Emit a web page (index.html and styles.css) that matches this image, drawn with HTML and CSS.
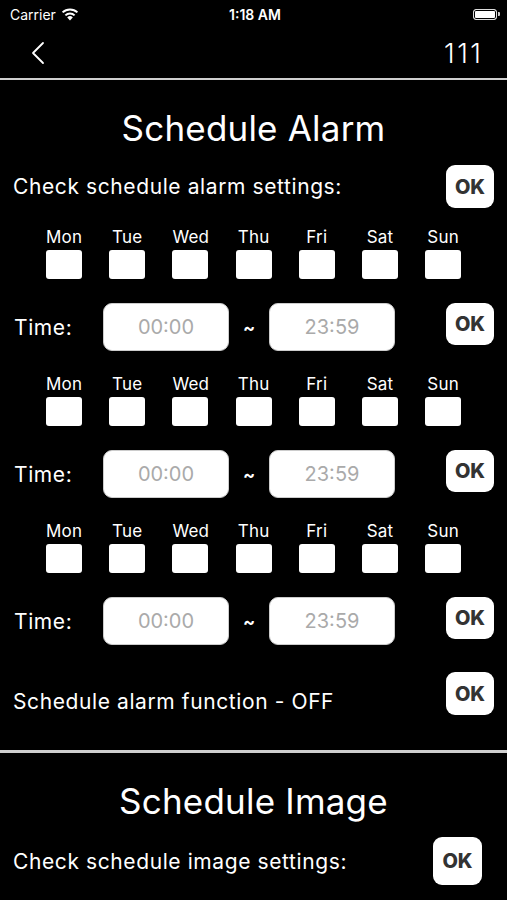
FILE: index.html
```html
<!DOCTYPE html>
<html lang="en">
<head>
    <meta charset="UTF-8">
    <meta name="viewport" content="width=device-width, initial-scale=1.0">
    <title>Schedule Alarm</title>
    <link rel="stylesheet" href="styles.css">
</head>
<body>
    <div class="status-bar">
        <div class="carrier">
            Carrier
            <svg class="wifi" width="18" height="13" viewBox="0 0 18 13">
                <path d="M9 12.5 L6.2 9.4 A4 4 0 0 1 11.8 9.4 Z" fill="#fff"/>
                <path d="M4.4 7.4 A6.6 6.6 0 0 1 13.6 7.4" stroke="#fff" stroke-width="2" fill="none"/>
                <path d="M1.6 4.4 A10.6 10.6 0 0 1 16.4 4.4" stroke="#fff" stroke-width="2" fill="none"/>
            </svg>
        </div>
        <div class="clock">1:18 AM</div>
        <div class="battery">
            <span class="battery-body"></span>
            <span class="battery-nub"></span>
        </div>
    </div>

    <nav class="nav-bar">
        <svg class="back" width="16" height="24" viewBox="0 0 16 24">
            <polyline points="13,2 3,12 13,22" stroke="#fff" stroke-width="1.8" fill="none" stroke-linecap="round" stroke-linejoin="round"/>
        </svg>
        <span class="nav-title">111</span>
    </nav>
    <div class="divider"></div>

    <section class="section">
        <h1 class="section-title">Schedule Alarm</h1>
        <div class="check-row">
            <span class="label">Check schedule alarm settings:</span>
            <button class="ok-btn">OK</button>
        </div>

        <!-- 第一組 -->
        <div class="days">
            <span>Mon</span><span>Tue</span><span>Wed</span><span>Thu</span><span>Fri</span><span>Sat</span><span>Sun</span>
            <i></i><i></i><i></i><i></i><i></i><i></i><i></i>
        </div>
        <div class="time-row">
            <span class="time-label">Time:</span>
            <div class="time-box">00:00</div>
            <span class="tilde">~</span>
            <div class="time-box">23:59</div>
            <button class="ok-btn small">OK</button>
        </div>

        <!-- 第二組 -->
        <div class="days">
            <span>Mon</span><span>Tue</span><span>Wed</span><span>Thu</span><span>Fri</span><span>Sat</span><span>Sun</span>
            <i></i><i></i><i></i><i></i><i></i><i></i><i></i>
        </div>
        <div class="time-row">
            <span class="time-label">Time:</span>
            <div class="time-box">00:00</div>
            <span class="tilde">~</span>
            <div class="time-box">23:59</div>
            <button class="ok-btn small">OK</button>
        </div>

        <!-- 第三組 -->
        <div class="days">
            <span>Mon</span><span>Tue</span><span>Wed</span><span>Thu</span><span>Fri</span><span>Sat</span><span>Sun</span>
            <i></i><i></i><i></i><i></i><i></i><i></i><i></i>
        </div>
        <div class="time-row">
            <span class="time-label">Time:</span>
            <div class="time-box">00:00</div>
            <span class="tilde">~</span>
            <div class="time-box">23:59</div>
            <button class="ok-btn small">OK</button>
        </div>

        <div class="function-row">
            <span class="label">Schedule alarm function - OFF</span>
            <button class="ok-btn">OK</button>
        </div>
    </section>
    <div class="divider thick"></div>

    <section class="section">
        <h1 class="section-title image-title">Schedule Image</h1>
        <div class="check-row image-row">
            <span class="label">Check schedule image settings:</span>
            <button class="ok-btn big">OK</button>
        </div>
    </section>
</body>
</html>
```

FILE: styles.css
```css
body {
    margin: 0;
    background-color: #000;
    color: #fff;
    font-family: Inter, "Liberation Sans", sans-serif;
    width: 507px;
    height: 900px;
    overflow: hidden;
}
.status-bar {
    height: 28px;
    display: flex;
    align-items: center;
    justify-content: space-between;
    padding: 0 7px 0 10px;
    font-size: 14px;
}
.carrier {
    display: flex;
    align-items: center;
    gap: 5px;
    width: 120px;
}
.clock {
    font-weight: 600;
}
.battery {
    width: 120px;
    display: flex;
    justify-content: flex-end;
    align-items: center;
}
.battery-body {
    width: 22px;
    height: 9px;
    border: 1.5px solid #ddd;
    border-radius: 3px;
    background: #fff;
    box-shadow: inset 0 0 0 1px #000;
}
.battery-nub {
    width: 2px;
    height: 4px;
    background: #ccc;
    border-radius: 0 1px 1px 0;
    margin-left: 1px;
}
.nav-bar {
    height: 50px;
    display: flex;
    align-items: center;
    justify-content: space-between;
    padding: 0 26px 0 30px;
}
.nav-title {
    font-size: 27px;
    font-weight: 300;
    letter-spacing: 2.5px;
    margin-right: -2.5px;
}
.divider {
    height: 2px;
    background: #cfcfcf;
}
.divider.thick {
    height: 3px;
    margin-top: 35px;
}
.section-title {
    margin: 28px 0 0 0;
    height: 40px;
    line-height: 40px;
    text-align: center;
    font-size: 35px;
    font-weight: 400;
    letter-spacing: 0.2px;
}
.check-row,
.function-row {
    display: flex;
    align-items: center;
    justify-content: space-between;
    padding: 0 13px;
    margin-top: 17px;
    height: 43px;
}
.label {
    font-size: 21px;
    letter-spacing: 0.6px;
}
.function-row {
    margin-top: 27px;
}
.function-row .label {
    padding-top: 16px;
}
.ok-btn {
    width: 48px;
    height: 43px;
    border: none;
    border-radius: 9px;
    background: #fff;
    color: #333;
    font-family: Inter, "Liberation Sans", sans-serif;
    font-size: 20px;
    font-weight: 800;
    padding: 0;
}
.ok-btn.small {
    height: 42px;
    margin-left: auto;
    align-self: flex-start;
}
.ok-btn.big {
    width: 49px;
    height: 48px;
}
.days {
    display: grid;
    grid-template-columns: repeat(7, 36px);
    column-gap: 27.2px;
    row-gap: 3px;
    padding-left: 46px;
    margin-top: 19px;
}
.days span {
    text-align: center;
    font-size: 17px;
    line-height: 20px;
    letter-spacing: 0.2px;
}
.days i {
    height: 29px;
    background: #fff;
    border-radius: 3px;
}
.time-row {
    display: flex;
    align-items: center;
    height: 48px;
    padding: 0 13px 0 14px;
    margin-top: 24px;
    margin-bottom: 23px;
}
.time-row + .days {
    margin-top: 0;
}
.time-label {
    width: 89px;
    font-size: 21px;
    letter-spacing: 0.6px;
}
.time-box {
    width: 124px;
    height: 46px;
    background: #fff;
    border: 1px solid #ccc;
    border-radius: 9px;
    color: #aaa;
    font-size: 20px;
    display: flex;
    align-items: center;
    justify-content: center;
}
.tilde {
    width: 40px;
    text-align: center;
    font-size: 18px;
    font-weight: 700;
}
.image-title {
    margin-top: 28px;
}
.image-row {
    padding-right: 25px;
    margin-top: 16px;
    height: 48px;
}
```
